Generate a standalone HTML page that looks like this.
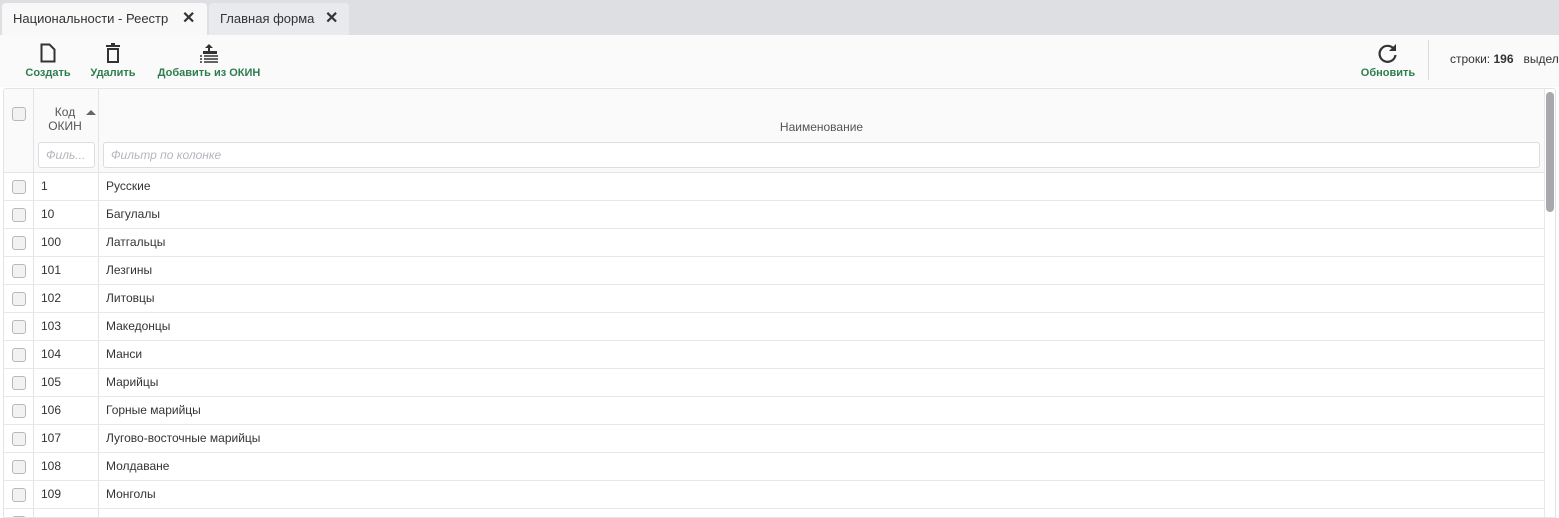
<!DOCTYPE html><html><head><meta charset="utf-8"><style>
*{box-sizing:border-box;margin:0;padding:0}
body{width:1559px;height:511px;overflow:hidden;background:#fff;font-family:"Liberation Sans",sans-serif;color:#333;position:relative}
.tabs{position:absolute;left:0;top:0;width:1559px;height:35px;background:#dddfe3}
.tab{position:absolute;top:3px;height:32px;font-size:13px;line-height:32px;padding-left:11px;color:#333;border-radius:4px 4px 0 0}
.tab .x{position:absolute;top:0;font-size:16px;font-weight:bold;color:#333}
.tb{position:absolute;left:0;top:35px;width:1559px;height:52px;background:#fafafa}
.btn{position:absolute;top:0;text-align:center;font-size:11px;color:#2e7d4f;font-weight:bold}
.btn svg{display:block;margin:8px auto 4px}
.grid{position:absolute;left:3px;top:88px;width:1553px;height:430px;border:1px solid #e3e3e8;border-radius:3px 3px 0 0;overflow:hidden}
.hdr{position:absolute;left:0;top:0;width:1540px;height:84px;background:#fafafa;border-bottom:1px solid #e3e3e8}
.vl{position:absolute;top:0;width:1px;background:#e3e3e8;height:430px}
.cb{position:absolute;width:14px;height:14px;border:1px solid #b8b8bc;border-radius:3px;background:#f2f2f2}
.inp{position:absolute;height:26px;border:1px solid #dcdce2;border-radius:3px;background:#fff;font-size:12px;font-style:italic;color:#b5b5bd;line-height:24px;padding-left:7px}
.row{position:absolute;left:0;width:1540px;height:28px;border-bottom:1px solid #e8e8ec;font-size:12px;line-height:27px}
.row span{position:absolute}
</style></head><body>
<div class="tabs">
<div class="tab" style="left:2px;width:205px;background:#f8f8f9">Национальности - Реестр<span class="x" style="left:180px">✕</span></div>
<div class="tab" style="left:209px;width:140px;background:#e9eaed">Главная форма<span class="x" style="left:116px">✕</span></div>
</div>
<div class="tb">
<div class="btn" style="left:24px;width:48px"><svg width="16" height="20" viewBox="0 0 16 20"><path d="M1.5 1.5h8l5 5v12h-13z" fill="none" stroke="#333" stroke-width="2"/></svg>Создать</div>
<div class="btn" style="left:88px;width:50px"><svg width="14" height="20" viewBox="0 0 14 20"><path d="M0 3h14M5 1h4" stroke="#333" stroke-width="2"/><rect x="2" y="6" width="10" height="13" fill="none" stroke="#333" stroke-width="2"/></svg>Удалить</div>
<div class="btn" style="left:155px;width:108px"><svg width="20" height="20" viewBox="0 0 20 20"><path d="M10 1l-4 4h3v3h2V5h3z" fill="#333"/><rect x="4" y="8" width="14" height="3" fill="#333"/><path d="M1 13h2M5 13h14M1 16h2M5 16h14M1 19h2M5 19h14" stroke="#333" stroke-width="1.6"/></svg>Добавить из ОКИН</div>
<div class="btn" style="left:1359px;width:58px"><svg width="22" height="20" viewBox="0 0 22 20"><path d="M17 6A8 8 0 1 0 18.5 12" fill="none" stroke="#333" stroke-width="2.2"/><path d="M19 1v7h-7z" fill="#333"/></svg>Обновить</div>
<div style="position:absolute;left:1428px;top:5px;width:1px;height:40px;background:#ddd"></div>
<div style="position:absolute;left:1450px;top:17px;font-size:12px;color:#333;white-space:nowrap">строки: <b>196</b> &nbsp; выдел</div>
</div>
<div class="grid">
<div class="hdr">
<div class="cb" style="left:8px;top:18px"></div>
<div style="position:absolute;left:36px;top:16px;width:50px;text-align:center;font-size:12px;color:#555;line-height:14px">Код<br>ОКИН</div>
<div style="position:absolute;left:82px;top:21px;width:0;height:0;border-left:5px solid transparent;border-right:5px solid transparent;border-bottom:5px solid #666"></div>
<div style="position:absolute;left:95px;top:31px;width:1445px;text-align:center;font-size:12px;color:#555">Наименование</div>
<div class="inp" style="left:34px;top:53px;width:57px">Филь...</div>
<div class="inp" style="left:99px;top:53px;width:1437px">Фильтр по колонке</div>
</div>
<div class="vl" style="left:29px"></div><div class="vl" style="left:94px"></div>
<div style="position:absolute;left:1540px;top:0;width:12px;height:430px;background:#fff;border-left:1px solid #e8e8ec"></div>
<div style="position:absolute;left:1542px;top:3px;width:8px;height:120px;background:#a8a8ad;border-radius:4px"></div>
<div id="rows"></div>
</div>
<script>
var d=[["1","Русские"],["10","Багулалы"],["100","Латгальцы"],["101","Лезгины"],["102","Литовцы"],["103","Македонцы"],["104","Манси"],["105","Марийцы"],["106","Горные марийцы"],["107","Лугово-восточные марийцы"],["108","Молдаване"],["109","Монголы"],["110",""]];
var h="";d.forEach(function(r,i){h+='<div class="row" style="top:'+(84+i*28)+'px"><div class="cb" style="left:8px;top:7px"></div><span style="left:37px">'+r[0]+'</span><span style="left:102px">'+r[1]+'</span></div>'});
document.getElementById("rows").innerHTML=h;
</script>
</body></html>
